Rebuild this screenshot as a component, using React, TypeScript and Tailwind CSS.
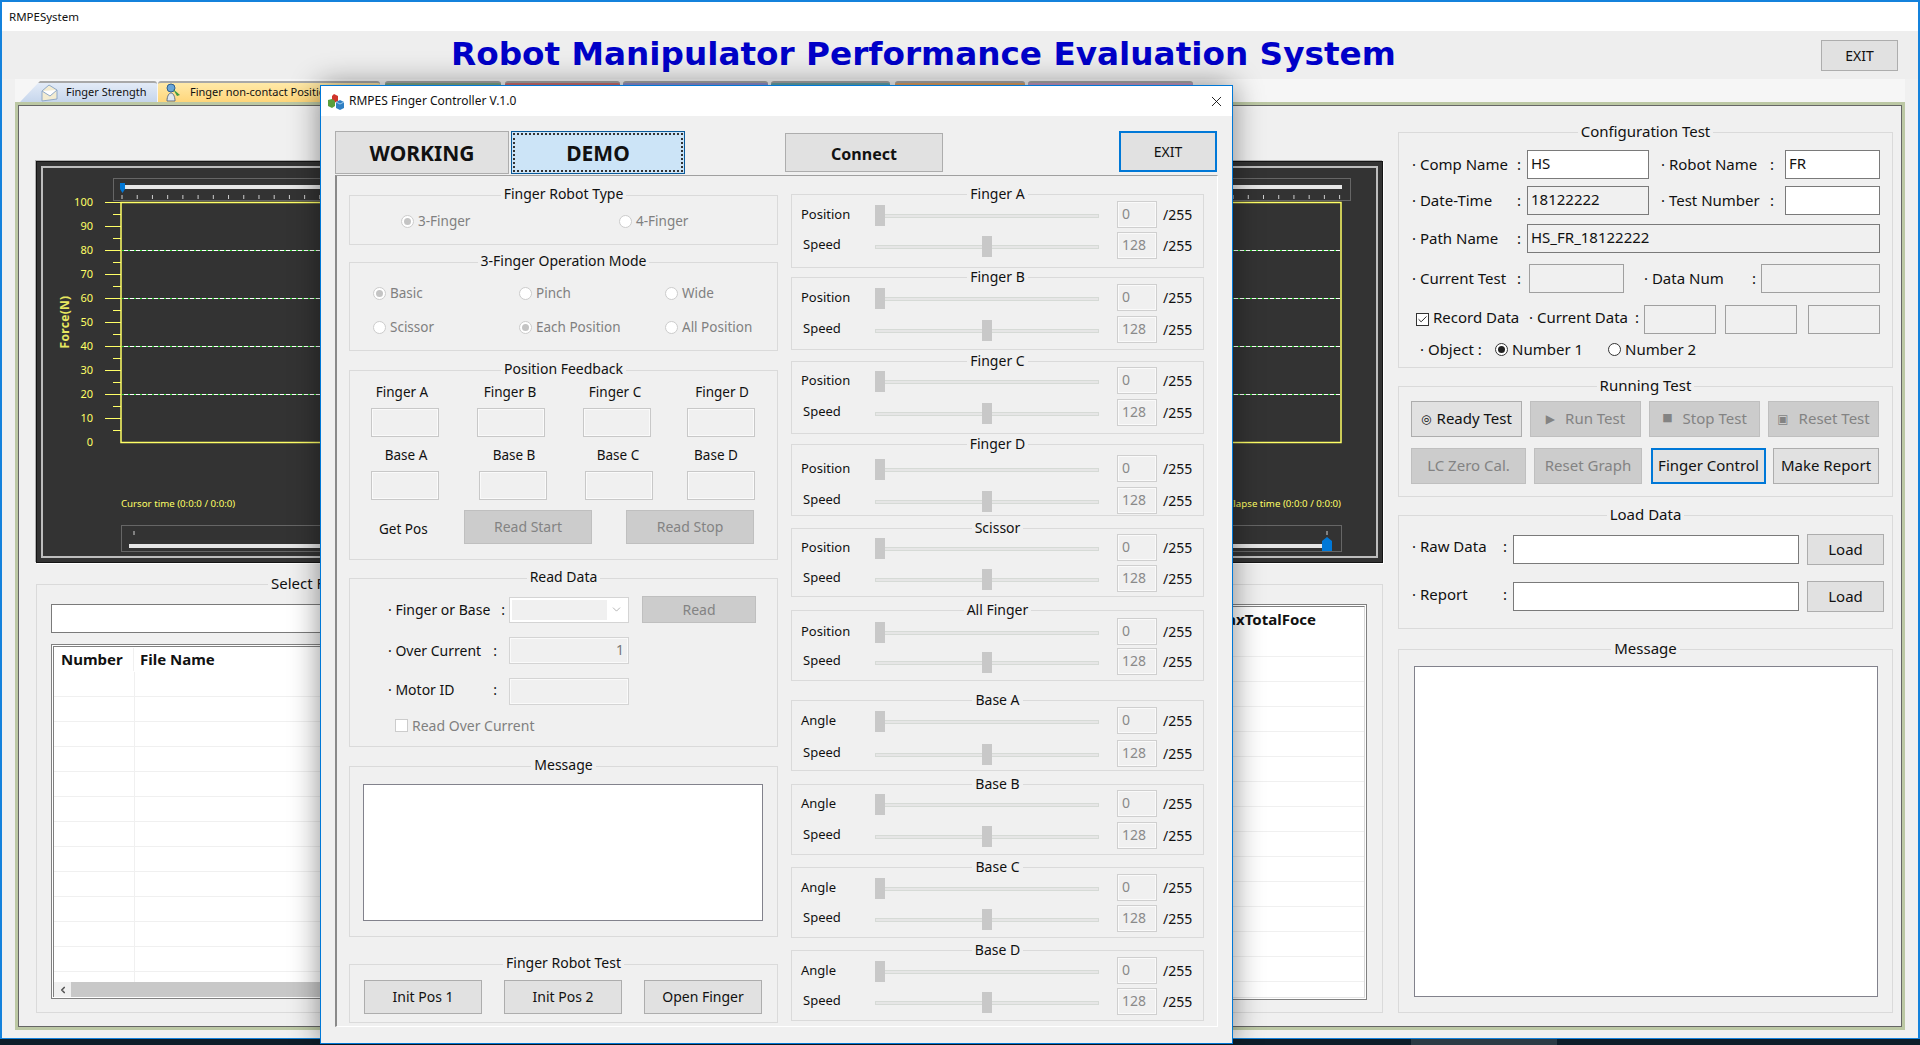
import type { ReactNode } from 'react';
import clsx from 'clsx';
import { Check, ChevronDown, ChevronLeft, X } from 'lucide-react';

const btnOn = 'bg-[#e1e1e1] border border-[#adadad] text-[#111]';
const btnOff = 'bg-[#cccccc] border border-[#bfbfbf] text-[#838383]';
const btnFocus = 'bg-[#e1e1e1] border-2 border-[#0078d7] text-[#111]';

const Group = ({ title, className, legendClass, children }: { title: string; className?: string; legendClass?: string; children?: ReactNode }) => (
  <fieldset className={clsx('border border-[#dadada] min-w-0', className)}>
    <legend className={clsx('px-[3px] leading-5 text-[#111]', legendClass ?? 'mx-auto -translate-y-px')}>{title}</legend>
    {children}
  </fieldset>
);

const Radio = ({ checked, disabled }: { checked?: boolean; disabled?: boolean }) => (
  <span className={clsx('flex h-[13px] w-[13px] shrink-0 items-center justify-center rounded-full border bg-white', disabled ? 'border-[#cccccc]' : 'border-[#333]')}>
    {checked && <span className={clsx('h-[7px] w-[7px] rounded-full', disabled ? 'bg-[#c4c4c4]' : 'bg-[#222]')} />}
  </span>
);

const DisabledRadio = ({ label, checked, className }: { label: string; checked?: boolean; className?: string }) => (
  <div className={clsx('flex items-center gap-1 text-[13.5px] leading-5 text-[#808080]', className)}>
    <Radio checked={checked} disabled />
    <span>{label}</span>
  </div>
);

const FieldLabel = ({ text, className }: { text: string; className?: string }) => (
  <div className={clsx('flex shrink-0 justify-between', className)}>
    <span>· {text}</span>
    <span>:</span>
  </div>
);

const Field = ({ value = '', className }: { value?: string; className?: string }) => (
  <input readOnly value={value} className={clsx('h-[29px] border border-[#7a7a7a] bg-white px-[3px] pb-[3px] text-[15px] text-[#111] outline-none', className)} />
);

const OffField = ({ className }: { className?: string }) => (
  <input readOnly value="" className={clsx('h-[29px] border border-[#c8c8c8] bg-[#f0f0f0] outline-none shadow-[inset_0_0_0_1px_#fafafa]', className)} />
);

/* ---------- slider groups on the right of the dialog ---------- */

const Slider = ({ label, labelClass, value, thumbClass, gapClass }: { label: string; labelClass: string; value: string; thumbClass: string; gapClass?: string }) => (
  <div className={clsx('flex h-[27px] items-center', gapClass)}>
    <span className={clsx('w-[83px] shrink-0 text-[13px] text-[#111]', labelClass)}>{label}</span>
    <div className="relative flex h-[21px] w-[224px] items-center translate-y-px">
      <div className="h-1 w-full border border-[#d6dad6] bg-[#e6e6e6]" />
      <div className={clsx('absolute top-0 h-[21px] w-[10px] bg-[#c8c8c8]', thumbClass)} />
    </div>
    <div className="ml-[18px] flex h-[27px] w-10 items-center border border-[#cfcfcf] bg-[#f0f0f0] pb-[2px] pl-[4px] text-[14px] text-[#8a8a8a] shadow-[inset_0_0_0_1px_#fafafa]">{value}</div>
    <span className="ml-[6px] text-[14px] text-[#111]">/255</span>
  </div>
);

const sliderGroups = [
  { title: 'Finger A', top: 'Position', box: 'h-[80px]', first: 'mt-px', gap: 'mt-[4px]' },
  { title: 'Finger B', top: 'Position', box: 'mt-[3px] h-[79px]', first: 'mt-px', gap: 'mt-[5px]' },
  { title: 'Finger C', top: 'Position', box: 'mt-[5px] h-[79px]', first: '', gap: 'mt-[5px]' },
  { title: 'Finger D', top: 'Position', box: 'mt-[4px] h-[78px]', first: 'mt-[5px]', gap: 'mt-[5px]' },
  { title: 'Scissor', top: 'Position', box: 'mt-[6px] h-[75px]', first: '', gap: 'mt-[4px]' },
  { title: 'All Finger', top: 'Position', box: 'mt-[7px] h-[77px]', first: 'mt-[2px]', gap: 'mt-[3px]' },
  { title: 'Base A', top: 'Angle', box: 'mt-[13px] h-[77px]', first: 'mt-px', gap: 'mt-[6px]' },
  { title: 'Base B', top: 'Angle', box: 'mt-[7px] h-[77px]', first: '', gap: 'mt-[5px]' },
  { title: 'Base C', top: 'Angle', box: 'mt-[6px] h-[77px]', first: 'mt-px', gap: 'mt-[4px]' },
  { title: 'Base D', top: 'Angle', box: 'mt-[6px] h-[77px]', first: 'mt-px', gap: 'mt-[4px]' },
];

/* ---------- position feedback cells, written per column ---------- */

const fingerCols = [
  { text: 'Finger A', label: 'ml-[18px]', box: 'ml-[21px]' },
  { text: 'Finger B', label: 'ml-[40px]', box: 'ml-[38px]' },
  { text: 'Finger C', label: 'ml-[37px]', box: 'ml-[38px]' },
  { text: 'Finger D', label: 'ml-[39px]', box: 'ml-[36px]' },
];
const baseCols = [
  { text: 'Base A', label: 'ml-[22px]', box: 'ml-[21px]' },
  { text: 'Base B', label: 'ml-[40px]', box: 'ml-[40px]' },
  { text: 'Base C', label: 'ml-[36px]', box: 'ml-[38px]' },
  { text: 'Base D', label: 'ml-[30px]', box: 'ml-[34px]' },
];

const FeedbackRows = ({ cols, labelGap }: { cols: typeof fingerCols; labelGap: string }) => (
  <>
    <div className={clsx('flex h-5 leading-5 text-[#111]', labelGap)}>
      {cols.map((c) => (
        <span key={c.text} className={clsx('w-[68px] shrink-0 -translate-y-px text-center text-[13.5px]', c.label)}>{c.text}</span>
      ))}
    </div>
    <div className="mt-[5px] flex">
      {cols.map((c) => (
        <OffField key={c.text} className={clsx('w-[68px] shrink-0', c.box)} />
      ))}
    </div>
  </>
);

/* ---------- small pictures ---------- */

const CubesIcon = () => (
  <svg width="16" height="17" viewBox="0 0 16 17" className="shrink-0">
    <path d="M6 1l4 2v5l-4 2-2-1V3z" fill="#d0352b" />
    <path d="M0 7l4-1 3 2v5l-3 2-4-2z" fill="#5a9e3c" />
    <path d="M8 9l4-2 4 2v6l-4 2-4-2z" fill="#2f7fc4" />
    <path d="M8 9l4 2 4-2" fill="none" stroke="#bfe0f5" strokeWidth="0.8" />
  </svg>
);

const MailIcon = () => (
  <svg width="17" height="19" viewBox="0 0 17 19" className="shrink-0">
    <path d="M1 8l7-6 8 5v9l-15 2z" fill="#f3ecd2" stroke="#8fa8c8" />
    <path d="M1 8l8 5 7-6" fill="#fff" stroke="#8fa8c8" />
  </svg>
);

const PersonIcon = () => (
  <svg width="16" height="20" viewBox="0 0 16 20" className="shrink-0">
    <circle cx="6" cy="5" r="4" fill="#6aa5d8" stroke="#2f5f90" />
    <path d="M2 18c0-5 2-8 4-8s4 3 4 8z" fill="#dfe6ee" stroke="#5f6f85" />
    <path d="M8 6l7 6-3 1z" fill="#3f9a3f" />
  </svg>
);

const tabs = [
  { key: 'strength', className: 'ml-[5px] w-[137px] bg-gradient-to-b from-[#e3ebf7] to-[#c6d6ec] [clip-path:polygon(20px_0,100%_0,100%_100%,0_100%)] pl-[21px]' },
  { key: 'position', className: 'ml-px w-[222px] bg-gradient-to-b from-[#ffe9a8] to-[#ffd67a] pl-[7px]' },
  { key: 't3', className: 'ml-[5px] w-[116px] bg-[#7fa98a]' },
  { key: 't4', className: 'ml-[4px] w-[115px] bg-[#cf6f70]' },
  { key: 't5', className: 'ml-[3px] w-[145px] bg-[#9191d2]' },
  { key: 't6', className: 'ml-[3px] w-[119px] bg-[#62a7b0]' },
  { key: 't7', className: 'ml-[5px] w-[130px] bg-[#e2a263]' },
  { key: 't8', className: 'ml-[3px] w-[165px] bg-[#c79ac2]' },
];

const Chart = () => {
  const yellow = '#ffff66';
  const ticks = Array.from({ length: 81 }, (_, i) => 122 + i * 15.22);
  const major = Array.from({ length: 11 }, (_, i) => i * 10);
  return (
    <div className="h-[402px] w-[1347px] shrink-0 border border-[#151515] bg-[#333333] p-[4px] shadow-[-1px_-1px_0_#b0b0b0,1px_1px_0_#ffffff]">
      <div className="h-full w-full border-2 border-[#bdbdbd]">
        <svg viewBox="43 168 1333 388" className="block h-full w-full" fontFamily="'Noto Sans', sans-serif">
          <rect x="113.5" y="178.5" width="1237" height="22" fill="none" stroke="#666" />
          <rect x="124" y="185" width="1218" height="4" fill="#e6e6e6" />
          <path d="M120 183h5v6l-2.500 4l-2.500-4z" fill="#0078d7" />
          {ticks.map((x) => (
            <line key={x} x1={x} x2={x} y1="195" y2="199" stroke="#cfcfcf" />
          ))}
          {[20, 40, 60, 80].map((v) => (
            <g key={v}>
              <line x1="122" x2="1340" y1={442.5 - v * 2.4} y2={442.5 - v * 2.4} stroke="#ffffff" />
              <line x1="122" x2="1340" y1={442.5 - v * 2.4} y2={442.5 - v * 2.4} stroke="#2fd02f" strokeDasharray="2 4" />
            </g>
          ))}
          <rect x="121" y="202.500" width="1220" height="240" fill="none" stroke={yellow} strokeWidth="1.500" />
          {major.map((v) => (
            <g key={v}>
              {v > 0 && <line x1="105" x2="121" y1={442.5 - v * 2.4} y2={442.5 - v * 2.4} stroke={yellow} />}
              <line x1="113" x2="121" y1={430.5 - v * 2.4} y2={430.5 - v * 2.4} stroke={v === 100 ? 'none' : yellow} />
              <text x="93" y={446 - v * 2.4} textAnchor="end" fontSize="11" fill={yellow}>{v}</text>
            </g>
          ))}
          <text x="69" y="322" textAnchor="middle" fontSize="12" fontWeight="700" fill="#e8e860" transform="rotate(-90 69 322)" letterSpacing="0.3">Force(N)</text>
          <text x="121" y="507" fontSize="9.700" fill={yellow}>Cursor time (0:0:0 / 0:0:0)</text>
          <text x="1341" y="507" textAnchor="end" fontSize="9.700" fill={yellow}>Elapse time (0:0:0 / 0:0:0)</text>
          <rect x="121.500" y="525.500" width="1220" height="26" fill="none" stroke="#666" />
          <rect x="129" y="544" width="1194" height="4" fill="#e6e6e6" />
          <line x1="134" x2="134" y1="531" y2="535" stroke="#cfcfcf" />
          <line x1="1327" x2="1327" y1="531" y2="535" stroke="#cfcfcf" />
          <path d="M1322 551v-10l5-4l5 4v10z" fill="#0078d7" />
        </svg>
      </div>
    </div>
  );
};

const FileTable = ({ className }: { className?: string }) => (
  <div className={clsx('border border-[#808080] bg-white p-px', className)}>
    <div className="flex h-full flex-col border border-b-0 border-[#808080]">
      <div className="flex h-[25px] shrink-0 items-center text-[15px] font-bold text-[#111]">
        <span className="w-[80px] shrink-0 border-r border-[#f0f0f0] pl-[7px]">Number</span>
        <span className="pl-[6px]">File Name</span>
      </div>
      <div className="min-h-0 flex-1 overflow-hidden">
        {Array.from({ length: 13 }, (_, i) => (
          <div key={i} className="flex h-[25px] border-b border-[#f0f0f0]">
            <div className="w-[81px] border-r border-[#f0f0f0]" />
          </div>
        ))}
      </div>
      <div className="flex h-[15px] shrink-0 bg-[#f0f0f0]">
        <div className="flex w-[17px] items-center justify-center text-[#555]"><ChevronLeft size={10} strokeWidth={4} /></div>
        <div className="flex-1 bg-[#c8c8c8]" />
      </div>
    </div>
  </div>
);

const ResultTable = ({ className }: { className?: string }) => (
  <div className={clsx('border border-[#808080] bg-white p-px', className)}>
    <div className="h-full border border-[#808080] border-r-[#d8d8d8] border-b-[#e4e4e4]">
      <div className="flex h-[25px] items-center justify-end pr-[48px] text-[15px] font-bold text-[#111]">MaxTotalFoce</div>
      {Array.from({ length: 14 }, (_, i) => (
        <div key={i} className="h-[25px] border-b border-[#f0f0f0]" />
      ))}
    </div>
  </div>
);

const Dialog = () => (
  <div className="absolute left-[320px] top-[85px] flex h-[959px] w-[913px] flex-col border border-[#0078d7] bg-[#f0f0f0] shadow-[0_0_28px_rgba(0,0,0,0.45)] text-[14px]">
    <div className="flex h-[30px] shrink-0 items-center bg-white pl-[7px] pr-[7px]">
      <CubesIcon />
      <span className="ml-[5px] text-[12px] text-[#111]">RMPES Finger Controller V.1.0</span>
      <X size={17} strokeWidth={1.2} className="ml-auto text-black" />
    </div>

    <div className="flex h-[44px] shrink-0 items-start pl-[14px] mt-[15px]">
      <button className="flex h-[43px] w-[174px] items-center justify-center border border-[#adadad] bg-[#e1e1e1] pt-[3px] text-[21px] font-bold text-[#111]">WORKING</button>
      <button className="ml-[2px] h-[43px] w-[174px] border border-[#0a5a9a] bg-[#cce4f7] p-px">
        <span className="flex h-full w-full items-center justify-center border-2 border-dotted border-[#333] pt-[2px] text-[21px] font-bold text-[#111]">DEMO</span>
      </button>
      <button className={clsx('ml-[100px] mt-[2px] h-[39px] w-[158px] pt-[2px] text-[16px] font-bold', btnOn)}>Connect</button>
      <button className={clsx('ml-[176px] h-[41px] w-[98px] pb-px text-[14px]', btnFocus)}>EXIT</button>
    </div>

    <div className="ml-[14px] flex h-[852px] w-[883px] shrink-0 border-b border-r border-l-2 border-t border-b-white border-r-white border-l-[#8a8a8a] border-t-[#a0a0a0]">
      <div className="ml-[12px] w-[429px] shrink-0 pt-[9px]">
        <Group title="Finger Robot Type" className="h-[60px]">
          <div className="mt-[6px] flex pl-[51px]">
            <DisabledRadio label="3-Finger" checked className="w-[218px]" />
            <DisabledRadio label="4-Finger" />
          </div>
        </Group>

        <Group title="3-Finger Operation Mode" className="mt-[7px] h-[99px]">
          <div className="mt-[11px] grid grid-cols-[146px_146px_1fr] gap-y-[14px] pl-[23px]">
            <DisabledRadio label="Basic" checked />
            <DisabledRadio label="Pinch" />
            <DisabledRadio label="Wide" />
            <DisabledRadio label="Scissor" />
            <DisabledRadio label="Each Position" checked />
            <DisabledRadio label="All Position" />
          </div>
        </Group>

        <Group title="Position Feedback" className="mt-[9px] h-[200px]">
          <FeedbackRows cols={fingerCols} labelGap="mt-[3px]" />
          <FeedbackRows cols={baseCols} labelGap="mt-[9px]" />
          <div className="mt-[10px] flex items-center">
            <span className="ml-[29px] w-[85px] pt-[4px] text-[13.5px] text-[#111]">Get Pos</span>
            <button className={clsx('h-[34px] w-[128px] pb-px text-[14px]', btnOff)}>Read Start</button>
            <button className={clsx('ml-[34px] h-[34px] w-[128px] pb-px text-[14px]', btnOff)}>Read Stop</button>
          </div>
        </Group>

        <Group title="Read Data" className="mt-[8px] h-[179px]">
          <div className="mt-[8px] flex h-[27px] items-center pl-[38px]">
            <FieldLabel text="Finger or Base" className="w-[121px] pr-[4px] text-[14px]" />
            <div className="flex h-[26px] w-[120px] items-center border border-[#d4d4d4] bg-white p-[2px]">
              <div className="h-full flex-1 bg-[#f0f0f0]" />
              <ChevronDown size={13} strokeWidth={1} className="mx-[3px] text-[#777]" />
            </div>
            <button className={clsx('ml-[13px] h-[27px] w-[114px] pb-px text-[14px]', btnOff)}>Read</button>
          </div>
          <div className="mt-[14px] flex h-[27px] items-center pl-[38px]">
            <FieldLabel text="Over Current" className="w-[121px] pr-[12px] text-[14px]" />
            <div className="flex h-[27px] w-[120px] items-center justify-end border border-[#d4d4d4] bg-[#f0f0f0] pb-[3px] pr-[4px] text-[#777] shadow-[inset_0_0_0_1px_#fafafa]">1</div>
          </div>
          <div className="mt-[14px] flex h-[27px] items-center pl-[38px]">
            <FieldLabel text="Motor ID" className="w-[121px] pr-[12px] pb-[4px] text-[14px]" />
            <div className="h-[27px] w-[120px] border border-[#d4d4d4] bg-[#f0f0f0] shadow-[inset_0_0_0_1px_#fafafa]" />
          </div>
          <div className="mt-[10px] flex h-5 items-center gap-1 pl-[45px] text-[14px] text-[#808080]">
            <span className="h-[13px] w-[13px] border border-[#cccccc] bg-white" />
            <span>Read Over Current</span>
          </div>
        </Group>

        <Group title="Message" className="mt-[9px] h-[181px]">
          <textarea readOnly className="mx-[13px] mt-[8px] block h-[137px] w-[400px] resize-none border border-[#82828c] bg-white outline-none" />
        </Group>

        <Group title="Finger Robot Test" className="mt-[17px] h-[69px]">
          <div className="mt-[6px] flex gap-[22px] pl-[14px]">
            <button className={clsx('h-[34px] w-[118px] pb-px', btnOn)}>Init Pos 1</button>
            <button className={clsx('h-[34px] w-[118px] pb-px', btnOn)}>Init Pos 2</button>
            <button className={clsx('h-[34px] w-[118px] pb-px', btnOn)}>Open Finger</button>
          </div>
        </Group>
      </div>

      <div className="ml-[13px] w-[413px] shrink-0 pt-[12px]">
        {sliderGroups.map((g) => (
          <Group key={g.title} title={g.title} className={g.box} legendClass="mx-auto !leading-3 !text-[14px]">
            <Slider label={g.top} labelClass="pl-[9px]" value="0" thumbClass="left-0" gapClass={g.first} />
            <Slider label="Speed" labelClass="-translate-y-px pl-[11px]" value="128" thumbClass="left-[107px]" gapClass={g.gap} />
          </Group>
        ))}
      </div>
    </div>
  </div>
);

export default function App() {
  return (
    <div className="relative h-[1045px] w-[1920px] overflow-hidden bg-[#0d1d29] font-['Noto_Sans',sans-serif] text-[15px] text-[#111]">
      <div className="absolute bottom-0 left-[1411px] h-[6px] w-[146px] bg-[#2b3b45]" />

      <div className="flex h-[1039px] flex-col border-x-2 border-b border-t-2 border-[#1482dc] bg-[#f0f0f0]">
        <div className="flex h-[29px] shrink-0 items-center bg-white pl-[7px] text-[11.5px]">RMPESystem</div>

        <div className="flex h-[48px] shrink-0 items-center bg-[#eeeeee] pl-[449px] pr-[20px]">
          <h1 className="font-['DejaVu_Sans',sans-serif] text-[32.7px] font-bold text-[#0000c8]">Robot Manipulator Performance Evaluation System</h1>
          <button className={clsx('ml-auto h-[31px] w-[77px] text-[14px]', btnOn)}>EXIT</button>
        </div>

        <div className="ml-[13px] flex h-[23px] w-[1890px] shrink-0 items-end bg-[#f6f6f6]">
          {tabs.map((t) => (
            <div key={t.key} className={clsx('flex h-[21px] shrink-0 items-center rounded-t-[3px] border-t-2 border-[#a8a8a8] text-[11px] text-[#111]', t.className)}>
              {t.key === 'strength' && (<><MailIcon /><span className="ml-2">Finger Strength</span></>)}
              {t.key === 'position' && (<><PersonIcon /><span className="ml-[9px]">Finger non-contact Position</span></>)}
            </div>
          ))}
        </div>

        <div className="ml-[13px] h-[928px] w-[1890px] shrink-0 border-[3px] border-[#bcc8a4]">
          <div className="flex h-full border border-[#666666]">
            <div className="ml-[17px] w-[1347px] shrink-0 pt-[55px]">
              <Chart />
              <Group title="Select File" legendClass="ml-[231px] -translate-y-px" className="mt-[11px] h-[439px]">
                <div className="mt-[10px] flex items-start pl-[14px]">
                  <div className="w-[649px] shrink-0">
                    <input readOnly value="" className="block h-[29px] w-full border border-[#7a7a7a] bg-white outline-none" />
                    <FileTable className="mt-[11px] h-[355px]" />
                  </div>
                  <ResultTable className="ml-[20px] h-[396px] w-[647px] shrink-0" />
                </div>
              </Group>
            </div>

            <div className="ml-[15px] w-[495px] shrink-0 pt-[16px]">
              <Group title="Configuration Test" className="h-[246px]">
                <div className="mt-[8px] flex items-center pl-[13px]">
                  <FieldLabel text="Comp Name" className="w-[115px] pr-[6px]" />
                  <Field value="HS" className="w-[122px]" />
                  <FieldLabel text="Robot Name" className="ml-[12px] w-[124px] pr-[11px]" />
                  <Field value="FR" className="w-[95px]" />
                </div>
                <div className="mt-[7px] flex items-center pl-[13px]">
                  <FieldLabel text="Date-Time" className="w-[115px] pr-[6px]" />
                  <Field value="18122222" className="w-[122px] !bg-[#f0f0f0]" />
                  <FieldLabel text="Test Number" className="ml-[12px] w-[124px] pr-[11px]" />
                  <Field className="w-[95px]" />
                </div>
                <div className="mt-[9px] flex items-center pl-[13px]">
                  <FieldLabel text="Path Name" className="w-[115px] pr-[6px]" />
                  <Field value="HS_FR_18122222" className="w-[353px] !bg-[#f0f0f0]" />
                </div>
                <div className="mt-[11px] flex items-center pl-[13px]">
                  <FieldLabel text="Current Test" className="w-[117px] pr-[8px]" />
                  <Field className="w-[95px] !border-[#a0a0a0] !bg-[#f0f0f0]" />
                  <FieldLabel text="Data Num" className="ml-[20px] w-[117px] pr-[5px]" />
                  <Field className="w-[119px] !border-[#a0a0a0] !bg-[#f0f0f0]" />
                </div>
                <div className="mt-[12px] flex items-center pl-[17px]">
                  <span className="flex h-[13px] w-[13px] shrink-0 items-center justify-center border border-[#333] bg-white"><Check size={11} strokeWidth={2} /></span>
                  <span className="ml-1 w-[96px] shrink-0 pb-[5px]">Record Data</span>
                  <FieldLabel text="Current Data" className="w-[115px] pr-[5px] pb-[5px]" />
                  <Field className="w-[72px] !border-[#a0a0a0] !bg-[#f0f0f0]" />
                  <Field className="ml-[9px] w-[72px] !border-[#a0a0a0] !bg-[#f0f0f0]" />
                  <Field className="ml-[11px] w-[72px] !border-[#a0a0a0] !bg-[#f0f0f0]" />
                </div>
                <div className="mt-px flex h-[28px] items-center pl-[21px]">
                  <span className="w-[75px] shrink-0">· Object :</span>
                  <Radio checked />
                  <span className="ml-1 w-[96px] shrink-0">Number 1</span>
                  <Radio />
                  <span className="ml-1">Number 2</span>
                </div>
              </Group>

              <Group title="Running Test" className="mt-[8px] h-[121px]">
                <div className="mt-[5px] flex gap-[8px] pl-[12px]">
                  <button className={clsx('flex h-9 w-[111px] items-center justify-center gap-[5px] pb-px', btnOn)}><span className="font-['DejaVu_Sans'] text-[12px]">◎</span>Ready Test</button>
                  <button className={clsx('flex h-9 w-[111px] items-center justify-center gap-[10px] pb-px', btnOff)}><span className="font-['DejaVu_Sans'] text-[12px]">▶</span>Run Test</button>
                  <button className={clsx('flex h-9 w-[111px] items-center justify-center gap-[10px] pb-px', btnOff)}><span className="font-['DejaVu_Sans'] text-[11px]">■</span>Stop Test</button>
                  <button className={clsx('flex h-9 w-[111px] items-center justify-center gap-[10px] pb-px', btnOff)}><span className="font-['DejaVu_Sans'] text-[12px]">▣</span>Reset Test</button>
                </div>
                <div className="mt-[11px] flex pl-[12px]">
                  <button className={clsx('h-9 w-[115px] pb-px', btnOff)}>LC Zero Cal.</button>
                  <button className={clsx('ml-[8px] h-9 w-[108px] pb-px', btnOff)}>Reset Graph</button>
                  <button className={clsx('ml-[9px] h-9 w-[115px] pb-px', btnFocus)}>Finger Control</button>
                  <button className={clsx('ml-[7px] h-9 w-[106px] pb-px', btnOn)}>Make Report</button>
                </div>
              </Group>

              <Group title="Load Data" className="mt-[8px] h-[124px]">
                <div className="mt-[9px] flex items-center pl-[13px]">
                  <FieldLabel text="Raw Data" className="w-[101px] pr-[6px] pb-[6px]" />
                  <Field className="w-[286px]" />
                  <button className={clsx('ml-[8px] h-[31px] w-[77px]', btnOn)}>Load</button>
                </div>
                <div className="mt-[16px] flex items-center pl-[13px]">
                  <FieldLabel text="Report" className="w-[101px] pr-[6px] pb-[5px]" />
                  <Field className="w-[286px]" />
                  <button className={clsx('ml-[8px] h-[31px] w-[77px]', btnOn)}>Load</button>
                </div>
              </Group>

              <Group title="Message" className="mt-[10px] h-[374px]">
                <textarea readOnly className="ml-[15px] mt-[7px] block h-[331px] w-[464px] resize-none border border-[#82828c] bg-white outline-none" />
              </Group>
            </div>
          </div>
        </div>
      </div>

      <Dialog />
    </div>
  );
}
